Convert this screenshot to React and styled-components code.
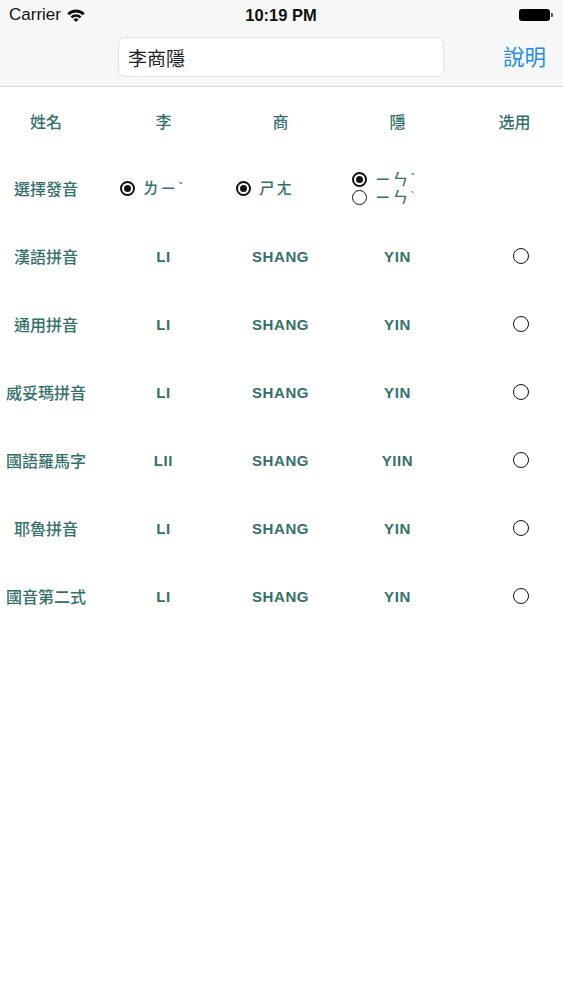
import React from "react";
import styled, { createGlobalStyle } from "styled-components";

const GlobalStyle = createGlobalStyle`
  html, body {
    margin: 0;
    padding: 0;
    background: #ffffff;
  }
  body {
    width: 563px;
    height: 1000px;
    overflow: hidden;
    font-family: "Liberation Sans", "Noto Sans CJK TC", sans-serif;
  }
  * { box-sizing: border-box; }
`;

const TEAL = "#34706a";

const Screen = styled.div`
  width: 563px;
  height: 1000px;
  background: #ffffff;
  display: flex;
  flex-direction: column;
`;

const TopArea = styled.header`
  background: #f7f7f7;
  border-bottom: 1px solid #d9d9d9;
`;

const StatusBar = styled.div`
  height: 30px;
  display: grid;
  grid-template-columns: 1fr auto 1fr;
  align-items: center;
  padding: 0 10px 0 9px;
  color: #111;
  font-size: 17px;
`;

const StatusLeft = styled.div`
  display: flex;
  align-items: center;
  gap: 6px;
`;

const StatusTime = styled.div`
  font-weight: 700;
  font-size: 16.5px;
`;

const StatusRight = styled.div`
  display: flex;
  justify-content: flex-end;
  align-items: center;
`;

const Battery = styled.div`
  display: flex;
  align-items: center;
  gap: 1px;
`;

const BatteryBody = styled.div`
  width: 31px;
  height: 12px;
  border-radius: 3px;
  background: #000;
`;

const BatteryNub = styled.div`
  width: 2px;
  height: 4px;
  border-radius: 0 1px 1px 0;
  background: #555;
`;

const NavBar = styled.div`
  height: 56px;
  display: flex;
  align-items: flex-start;
  padding: 7px 17px 0 118px;
`;

const SearchField = styled.div`
  width: 326px;
  height: 40px;
  background: #ffffff;
  border: 1px solid #e2e2e2;
  border-radius: 7px;
  display: flex;
  align-items: center;
  padding-left: 9px;
  font-family: "Noto Sans CJK TC", sans-serif;
  font-size: 19px;
  color: #222;
`;

const NavButton = styled.div`
  margin-left: auto;
  margin-top: 3px;
  font-family: "Noto Sans CJK TC", sans-serif;
  font-size: 21.5px;
  color: #2a8be2;
  line-height: 32px;
`;

const Table = styled.div`
  display: flex;
  flex-direction: column;
`;

const Row = styled.div`
  height: ${(p) => (p.$head ? 67 : 68)}px;
  display: flex;
  align-items: center;
`;

const Label = styled.div`
  width: 92px;
  flex: none;
  text-align: center;
  font-family: "Noto Sans CJK TC", sans-serif;
  font-size: 16px;
  font-weight: 500;
  color: ${TEAL};
  white-space: nowrap;
`;

const Cells = styled.div`
  display: flex;
  padding-left: 13px;
  height: 100%;
`;

const Cell = styled.div`
  width: 117px;
  flex: none;
  display: flex;
  align-items: center;
  justify-content: ${(p) => (p.$start ? "flex-start" : "center")};
  padding-left: ${(p) => p.$pad || 0}px;
  color: ${TEAL};
`;

const HeadText = styled.span`
  font-family: "Noto Sans CJK TC", sans-serif;
  font-size: 16px;
  font-weight: 500;
`;

const Spell = styled.span`
  font-family: "Liberation Sans", sans-serif;
  font-weight: 700;
  font-size: 15px;
  letter-spacing: 0.6px;
`;

const ChoiceStack = styled.div`
  display: flex;
  flex-direction: column;
  gap: 0;
`;

const Choice = styled.div`
  display: flex;
  align-items: center;
  gap: 8px;
  height: ${(p) => (p.$compact ? "18px" : "24px")};
`;

const RadioMark = styled.span`
  width: ${(p) => p.$size || 15}px;
  height: ${(p) => p.$size || 15}px;
  border-radius: 50%;
  border: ${(p) => p.$border || 2}px solid #111;
  display: inline-flex;
  align-items: center;
  justify-content: center;
  flex: none;
  &::after {
    content: "";
    display: ${(p) => (p.$checked ? "block" : "none")};
    width: 7px;
    height: 7px;
    border-radius: 50%;
    background: #111;
  }
`;

const Zhuyin = styled.span`
  font-family: "Liberation Sans", "Noto Sans CJK TC", sans-serif;
  font-size: 15.5px;
  font-weight: 500;
  color: ${TEAL};
  letter-spacing: 2px;
  line-height: 15px;
`;

const Tone = styled.span`
  font-family: "DejaVu Sans", sans-serif;
  font-size: 11px;
  line-height: 0;
  vertical-align: 3px;
  margin-left: 0;
`;

const OptionRadio = styled(RadioMark)`
  margin-left: 12px;
`;

function band(r1, r2) {
  const cx = 9;
  const cy = 13;
  const s = Math.SQRT1_2;
  const p = (r, sign) => `${(cx + sign * r * s).toFixed(2)} ${(cy - r * s).toFixed(2)}`;
  if (r1 === 0) {
    return `M${p(r2, -1)} A${r2} ${r2} 0 0 1 ${p(r2, 1)} L${cx} ${cy} Z`;
  }
  return `M${p(r2, -1)} A${r2} ${r2} 0 0 1 ${p(r2, 1)} L${p(r1, 1)} A${r1} ${r1} 0 0 0 ${p(r1, -1)} Z`;
}

const WifiIcon = () => (
  <svg width="18" height="13" viewBox="0 0 18 13" aria-hidden="true">
    <path d={band(0, 3.6)} fill="#111" />
    <path d={band(5.2, 7.8)} fill="#111" />
    <path d={band(9.4, 12.4)} fill="#111" />
  </svg>
);

const schemes = [
  { name: "漢語拼音", a: "LI", b: "SHANG", c: "YIN" },
  { name: "通用拼音", a: "LI", b: "SHANG", c: "YIN" },
  { name: "威妥瑪拼音", a: "LI", b: "SHANG", c: "YIN" },
  { name: "國語羅馬字", a: "LII", b: "SHANG", c: "YIIN" },
  { name: "耶魯拼音", a: "LI", b: "SHANG", c: "YIN" },
  { name: "國音第二式", a: "LI", b: "SHANG", c: "YIN" },
];

export default function App() {
  return (
    <Screen>
      <GlobalStyle />
      <TopArea>
        <StatusBar>
          <StatusLeft>
            <span>Carrier</span>
            <WifiIcon />
          </StatusLeft>
          <StatusTime>10:19 PM</StatusTime>
          <StatusRight>
            <Battery>
              <BatteryBody />
              <BatteryNub />
            </Battery>
          </StatusRight>
        </StatusBar>
        <NavBar>
          <SearchField>李商隱</SearchField>
          <NavButton>說明</NavButton>
        </NavBar>
      </TopArea>

      <Table>
        <Row $head>
          <Label>姓名</Label>
          <Cells>
            <Cell><HeadText>李</HeadText></Cell>
            <Cell><HeadText>商</HeadText></Cell>
            <Cell><HeadText>隱</HeadText></Cell>
            <Cell><HeadText>选用</HeadText></Cell>
          </Cells>
        </Row>

        <Row>
          <Label>選擇發音</Label>
          <Cells>
            <Cell $start $pad={15}>
              <Choice>
                <RadioMark $checked />
                <Zhuyin>ㄌㄧ<Tone>ˇ</Tone></Zhuyin>
              </Choice>
            </Cell>
            <Cell $start $pad={14}>
              <Choice>
                <RadioMark $checked />
                <Zhuyin>ㄕㄤ</Zhuyin>
              </Choice>
            </Cell>
            <Cell $start $pad={13}>
              <ChoiceStack>
                <Choice $compact>
                  <RadioMark $checked />
                  <Zhuyin>ㄧㄣ<Tone>ˇ</Tone></Zhuyin>
                </Choice>
                <Choice $compact>
                  <RadioMark $border={1.6} />
                  <Zhuyin>ㄧㄣ<Tone>ˋ</Tone></Zhuyin>
                </Choice>
              </ChoiceStack>
            </Cell>
            <Cell />
          </Cells>
        </Row>

        {schemes.map((s) => (
          <Row key={s.name}>
            <Label>{s.name}</Label>
            <Cells>
              <Cell><Spell>{s.a}</Spell></Cell>
              <Cell><Spell>{s.b}</Spell></Cell>
              <Cell><Spell>{s.c}</Spell></Cell>
              <Cell>
                <OptionRadio $size={16} $border={1.6} />
              </Cell>
            </Cells>
          </Row>
        ))}
      </Table>
    </Screen>
  );
}
